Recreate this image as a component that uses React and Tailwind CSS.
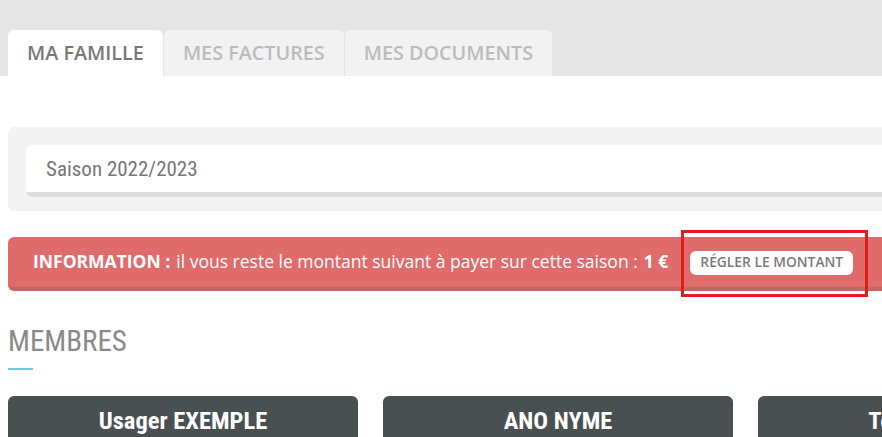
export default function App() {
  const tabs = [
    { label: "MA FAMILLE", active: true },
    { label: "MES FACTURES" },
    { label: "MES DOCUMENTS" },
  ];
  const members = ["Usager EXEMPLE", "ANO NYME", "Test USAGER"];

  return (
    <div className="w-[882px] h-[437px] overflow-hidden bg-white font-['Open_Sans',sans-serif]">
      <div className="w-[1140px]">
        {/* tabs bar */}
        <div className="bg-[#e5e5e5] h-[76px] flex items-end px-2 gap-px">
          {tabs.map((t) => (
            <div
              key={t.label}
              className={
                "h-[46px] flex items-center px-[19px] rounded-t-md text-[19.8px] font-semibold " +
                (t.active ? "bg-white text-[#787878]" : "bg-[#f2f2f2] text-[#bcbcbc]")
              }
            >
              {t.label}
            </div>
          ))}
        </div>

        <div className="px-2 pt-[51px]">
          {/* season selector */}
          <div className="bg-[#f3f3f3] rounded-md py-[18px] pl-[18px] h-[84px]">
            <div className="bg-white rounded-md h-[52px] border-b-[5px] border-[#dedede] flex items-center pl-5 pt-[3px]">
              <span className="text-[21px] text-[#777] font-['Roboto_Condensed',sans-serif]">Saison 2022/2023</span>
            </div>
          </div>

          {/* info banner */}
          <div className="mt-[26px] h-[54px] bg-[#e06b6b] rounded-md border-b-4 border-[#c76262] flex items-center pl-[25px] pb-[2px] text-white text-[17.5px]">
            <span className="font-bold">INFORMATION :</span>
            <span className="ml-1.5">il vous reste le montant suivant à payer sur cette saison :</span>
            <span className="font-bold ml-1.5">1 €</span>
            <div className="relative ml-[22px]">
              <button className="bg-white rounded-md h-[24px] px-[10px] text-[13.8px] font-semibold text-[#7a7a7a]">
                RÉGLER LE MONTANT
              </button>
              <div className="absolute -left-[9px] -top-[17px] w-[187px] h-[67px] border-[3px] border-[#e31b1b]" />
            </div>
          </div>

          {/* members */}
          <div className="mt-[36px] text-[29px] text-[#8a8a8a] leading-none font-['Roboto_Condensed',sans-serif]">MEMBRES</div>
          <div className="mt-[12px] w-[25px] h-[2px] bg-[#6ccbe0]" />

          <div className="mt-[26px] flex gap-[25px]">
            {members.map((m) => (
              <div
                key={m}
                className="w-[350px] h-[60px] bg-[#4a5052] rounded-t-md flex justify-center pt-[9px] text-white text-[24.5px] font-bold leading-[32px] font-['Roboto_Condensed',sans-serif]"
              >
                {m}
              </div>
            ))}
          </div>
        </div>
      </div>
    </div>
  );
}
